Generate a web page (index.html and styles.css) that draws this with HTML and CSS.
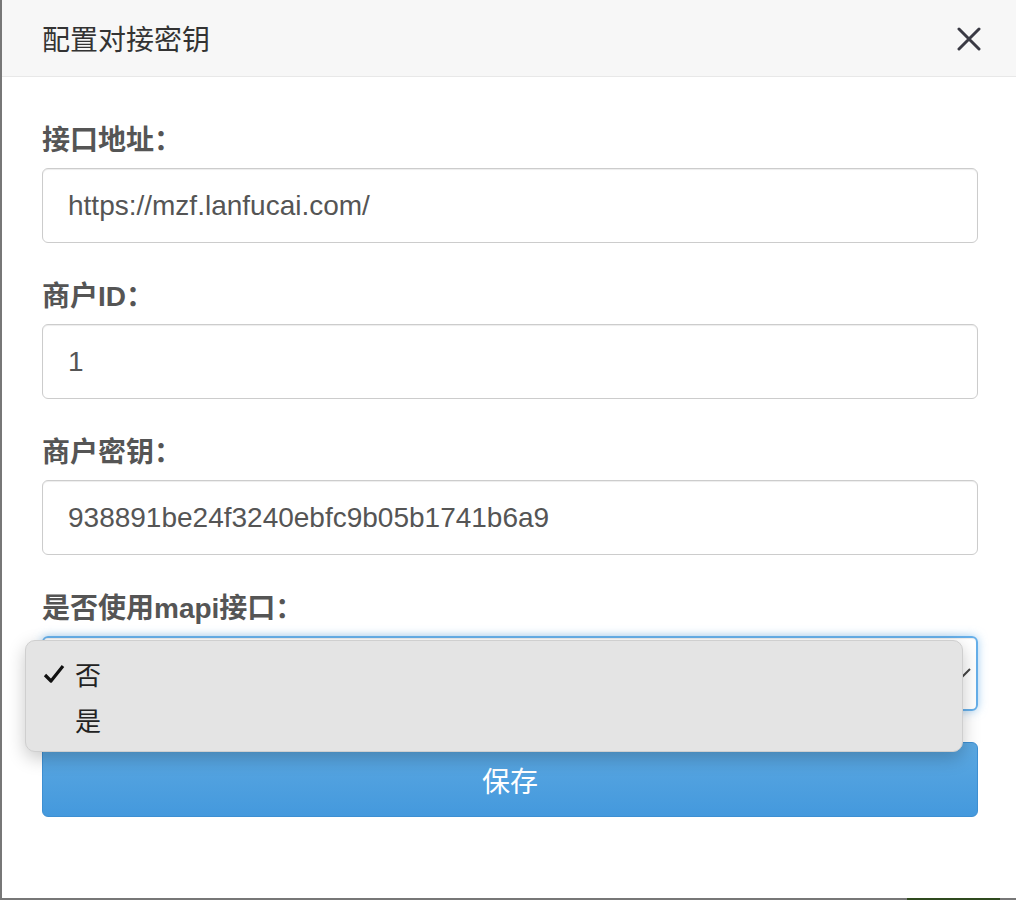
FILE: index.html
```html
<!DOCTYPE html>
<html lang="zh-CN">
<head>
<meta charset="utf-8">
<title>配置对接密钥</title>
<link rel="stylesheet" href="styles.css">
</head>
<body>
<div class="frame">
  <div class="modal">
    <div class="modal-header">
      <h4 class="modal-title">配置对接密钥</h4>
      <button class="close" type="button" aria-label="关闭">
        <svg width="24" height="24" viewBox="0 0 24 24"><path d="M2 2 L22 22 M22 2 L2 22" stroke="#3a3a44" stroke-width="3" stroke-linecap="round"/></svg>
      </button>
    </div>
    <div class="modal-body">
      <div class="form-group">
        <label class="label">接口地址：</label>
        <div class="input">https://mzf.lanfucai.com/</div>
      </div>
      <div class="form-group">
        <label class="label">商户ID：</label>
        <div class="input">1</div>
      </div>
      <div class="form-group">
        <label class="label">商户密钥：</label>
        <div class="input">938891be24f3240ebfc9b05b1741b6a9</div>
      </div>
      <div class="form-group select-group">
        <label class="label">是否使用mapi接口：</label>
        <div class="input select">
          <span>否</span>
          <svg class="chevron" width="18" height="12" viewBox="0 0 18 12"><path d="M1 2 L9 10 L17 2" fill="none" stroke="#444" stroke-width="2"/></svg>
        </div>
        <ul class="menu">
          <li class="menu-item"><svg class="check" width="22" height="20" viewBox="0 0 22 20"><path d="M2 11 L8 17 L20 2" fill="none" stroke="#111" stroke-width="3.2" stroke-linejoin="round"/></svg><span>否</span></li>
          <li class="menu-item"><span class="check-space"></span><span>是</span></li>
        </ul>
      </div>
      <button class="btn" type="button">保存</button>
    </div>
  </div>
  <div class="bottom-bar"><span class="green"></span></div>
</div>
</body>
</html>
```
FILE: styles.css
```css
* { box-sizing: border-box; }
html, body { margin: 0; padding: 0; background: #fff; }
body {
  font-family: "Liberation Sans", "Noto Sans CJK SC", sans-serif;
  color: #555;
}
.frame {
  width: 1016px;
  height: 900px;
  border-left: 2px solid #777;
  display: flex;
  flex-direction: column;
  overflow: hidden;
}
.modal { flex: 1; background: #fff; }
.modal-header {
  height: 77px;
  background: #f7f7f7;
  border-bottom: 1px solid #e8e8e8;
  display: flex;
  align-items: center;
  justify-content: space-between;
  padding: 0 32px 0 40px;
}
.modal-title {
  margin: 0;
  font-size: 28px;
  font-weight: normal;
  color: #333;
}
.close {
  border: 0;
  background: none;
  padding: 0;
  width: 26px;
  height: 26px;
  display: flex;
  align-items: center;
  justify-content: center;
  margin-top: 1px;
  margin-right: 2px;
}
.modal-body { padding: 41px 38px 0 40px; }
.form-group { margin-bottom: 31px; }
.select-group { position: relative; }
.label {
  display: block;
  font-size: 28px;
  line-height: 40px;
  padding-top: 3px;
  font-weight: bold;
  color: #555;
  margin-bottom: 7px;
}
.input {
  height: 75px;
  border: 1px solid #ccc;
  border-radius: 6px;
  padding: 0 25px;
  font-size: 28px;
  color: #555;
  display: flex;
  align-items: center;
  box-shadow: inset 0 1px 1px rgba(0,0,0,0.075);
}
.select {
  border: 2px solid #66afe9;
  justify-content: space-between;
  box-shadow: inset 0 1px 1px rgba(0,0,0,0.075), 0 0 10px rgba(102,175,233,0.6);
  padding-right: 5px;
}
.chevron { margin-top: -2px; }
.menu {
  position: absolute;
  left: -17px;
  top: 54px;
  width: 938px;
  height: 112px;
  margin: 0;
  padding: 9px 0 0 0;
  list-style: none;
  background: #e4e4e4;
  border: 1px solid #cfcfcf;
  border-radius: 10px;
  box-shadow: 0 6px 18px rgba(0,0,0,0.22);
}
.menu-item {
  height: 46px;
  display: flex;
  align-items: center;
  font-size: 26px;
  color: #222;
  padding-left: 17px;
}
.check { width: 22px; height: 20px; margin-right: 10px; margin-top: 2px; }
.check-space { display: inline-block; width: 32px; }
.btn {
  display: block;
  width: 100%;
  height: 75px;
  border: 1px solid #3d8fd2;
  border-radius: 6px;
  background: linear-gradient(#5ca8e1, #4499dd);
  color: #fff;
  font-size: 28px;
  font-family: "Liberation Sans", "Noto Sans CJK SC", sans-serif;
}
.bottom-bar {
  height: 2px;
  background: #777;
  flex: none;
  position: relative;
}
.green {
  position: absolute;
  left: 905px;
  top: 0;
  width: 93px;
  height: 2px;
  background: #2f4a1e;
}
```
